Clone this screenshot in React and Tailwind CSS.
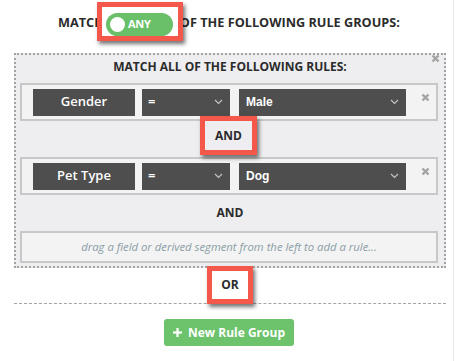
import React from 'react';

const Chevron = () => (
  <svg width="9" height="6" viewBox="0 0 9 6" className="shrink-0">
    <polyline points="1,1 4.5,4.5 8,1" fill="none" stroke="#c4c4c4" strokeWidth="1.2" />
  </svg>
);

const Cross = ({ className = '' }) => (
  <svg width="9" height="9" viewBox="0 0 9 9" className={className}>
    <line x1="1.5" y1="1.5" x2="7.5" y2="7.5" stroke="#a3a3a3" strokeWidth="2.4" />
    <line x1="7.5" y1="1.5" x2="1.5" y2="7.5" stroke="#a3a3a3" strokeWidth="2.4" />
  </svg>
);

// red highlight frame drawn over the UI
const Annotation = ({ className = '', children }) => (
  <div
    className={`absolute border-[5px] border-[#f4584a] shadow-[2px_3px_4px_rgba(0,0,0,0.55)] flex items-center justify-center ${className}`}
  >
    {children}
  </div>
);

const RuleRow = ({ field, value }) => (
  <div className="ml-[4px] w-[418px] h-[38px] border-2 border-[#c8c8c8] bg-[#f3f3f3] flex items-center pl-[11px]">
    <div className="w-[102px] h-[27px] bg-[#4e4e4e] text-white text-[13px] font-semibold flex items-center justify-center">
      {field}
    </div>
    <div className="ml-[7px] w-[88px] h-[27px] bg-[#4e4e4e] text-white text-[13px] font-semibold flex items-center justify-between pl-[6px] pr-[7px]">
      <span>=</span>
      <Chevron />
    </div>
    <div className="ml-[9px] w-[167px] h-[27px] bg-[#4e4e4e] text-white text-[12px] font-bold flex items-center justify-between pl-[7px] pr-[7px] font-['Liberation_Sans',sans-serif]">
      <span>{value}</span>
      <Chevron />
    </div>
    <Cross className="ml-[15px] -mt-[10px]" />
  </div>
);

export default function App() {
  return (
    <div className="w-[457px] h-[361px] bg-white font-['Open_Sans',sans-serif] text-[#2b2b2b] overflow-hidden">
      <div className="w-[454px] h-full border-r border-[#e6e6e6]">
        <div className="relative h-[53px] flex items-center pl-[58px] pb-[7px] text-[12.7px] font-bold">
          <span>MATCH</span>
          <span className="w-[76px]" />
          <span>OF THE FOLLOWING RULE GROUPS:</span>
          <Annotation className="left-[97px] top-[2px] w-[86px] h-[39px] bg-white">
            <div className="mt-[6px] -ml-[1px] w-[67px] h-[23px] rounded-full bg-[#6abf69] flex items-center pl-[4px]">
              <div className="w-[15px] h-[15px] rounded-full bg-white" />
              <span className="ml-[3px] text-white text-[11px] font-bold tracking-tight">ANY</span>
            </div>
          </Annotation>
        </div>

        <div className="relative ml-[14px] w-[432px] h-[215px] border-2 border-dotted border-[#a3a3a3] bg-[#eeeef0]">
          <Cross className="absolute right-[4px] top-[-1px]" />
          <div className="h-[28px] flex items-center justify-center text-[12px] font-bold pb-[5px]">
            MATCH ALL OF THE FOLLOWING RULES:
          </div>
          <RuleRow field="Gender" value="Male" />
          <div className="relative h-[36px] flex items-center justify-center text-[12px] font-bold">
            <Annotation className="left-[184px] top-[-5px] w-[57px] h-[39px] bg-[#eeeef0]">AND</Annotation>
          </div>
          <RuleRow field="Pet Type" value="Dog" />
          <div className="h-[36px] flex items-center justify-center text-[12px] font-bold">AND</div>
          <div className="ml-[4px] w-[418px] h-[32px] border-2 border-[#c8c8c8] bg-[#f3f3f3] flex items-center justify-center text-[11.3px] italic text-[#8a9ea6]">
            drag a field or derived segment from the left to add a rule...
          </div>
        </div>

        <div className="relative h-[36px] ml-[14px] w-[432px] border-b border-dashed border-[#a3a3a3]">
          <Annotation className="left-[193px] top-[-2px] w-[46px] h-[38px] bg-white text-[12px] font-bold">OR</Annotation>
        </div>

        <div className="flex justify-center pt-[15px] pl-[5px]">
          <button className="w-[130px] h-[27px] rounded-[3px] bg-[#6cc36b] text-white text-[12px] font-bold flex items-center justify-center gap-[6px]">
            <svg width="9" height="9" viewBox="0 0 9 9">
              <line x1="4.5" y1="0" x2="4.5" y2="9" stroke="white" strokeWidth="2.2" />
              <line x1="0" y1="4.5" x2="9" y2="4.5" stroke="white" strokeWidth="2.2" />
            </svg>
            New Rule Group
          </button>
        </div>
      </div>
    </div>
  );
}
